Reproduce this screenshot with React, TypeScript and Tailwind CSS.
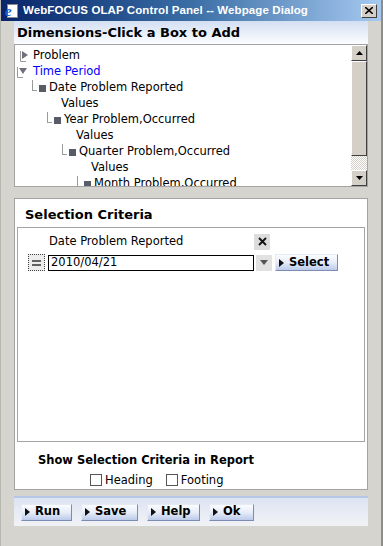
import React from 'react';

const font = { fontFamily: '"DejaVu Sans", Verdana, sans-serif' };

const Corner: React.FC = () => (
    <span className="relative inline-block w-[5px] h-[11px] mr-[2px] self-start">
        <span className="absolute left-0 top-0 w-px h-[11px] bg-[#9a9a9a]" />
        <span className="absolute left-0 bottom-0 w-[5px] h-px bg-[#9a9a9a]" />
    </span>
);

const TreeLeaf: React.FC<{ indent: number; label: string }> = ({ indent, label }) => (
    <div className="flex items-center h-[16px]" style={{ paddingLeft: indent }}>
        <Corner />
        <span className="w-[7px] h-[7px] bg-[#575c66] mr-[3px]" />
        <span>{label}</span>
    </div>
);

const Values: React.FC<{ indent: number }> = ({ indent }) => (
    <div className="flex items-center h-[16px]" style={{ paddingLeft: indent }}>
        Values
    </div>
);

const BlueButton: React.FC<{ label: string; w: string }> = ({ label, w }) => (
    <button
        className={`${w} h-[17px] flex items-center pl-[3px] border border-[#7c8cb2] border-t-[#e4eaf6] border-l-[#e4eaf6] bg-gradient-to-b from-[#fbfcff] via-[#e6ecf8] to-[#bccbea] text-[11.5px] font-bold text-black`}
        style={font}
    >
        <svg width="5" height="8" viewBox="0 0 5 8" className="mr-[5px]">
            <path d="M0 0 L5 4 L0 8 Z" fill="#111" />
        </svg>
        {label}
    </button>
);

export default function App() {
    return (
        <div className="w-[383px] h-[546px] bg-[#d6d4cf] border-l border-l-[#b8b6b0] border-r-2 border-r-[#8f8d89] flex flex-col overflow-hidden" style={font}>
            {/* Title bar */}
            <div className="h-[21px] flex items-center bg-gradient-to-r from-[#0a246a] via-[#3a6ea5] to-[#a6caf0] pl-[3px] pr-[3px]">
                <div className="relative w-[16px] h-[16px] mr-[3px]">
                    <div className="absolute left-[3px] top-[1px] w-[11px] h-[14px] bg-white border border-[#8a8a8a]" />
                    <span className="absolute left-[1px] top-[-3px] text-[15px] italic font-bold text-[#1a5fd0]" style={{ fontFamily: '"Liberation Serif", serif' }}>e</span>
                </div>
                <span className="text-white font-bold text-[11.5px] tracking-[0.1px]" style={{ fontFamily: '"Liberation Sans", Arial, sans-serif' }}>
                    WebFOCUS OLAP Control Panel -- Webpage Dialog
                </span>
                <div className="ml-auto w-[16px] h-[14px] bg-[#d4d0c8] border border-white border-r-[#404040] border-b-[#404040] flex items-center justify-center mr-[1px]">
                    <svg width="8" height="7" viewBox="0 0 8 7">
                        <path d="M0 0 L8 7 M8 0 L0 7" stroke="#000" strokeWidth="1.6" />
                    </svg>
                </div>
            </div>

            <div className="px-[13px] flex flex-col">
                {/* Dimensions header */}
                <div className="h-[23px] flex items-center pl-[3px] bg-gradient-to-b from-[#d3dff2] to-[#fcfdff] text-[13px] font-bold text-black">
                    Dimensions-Click a Box to Add
                </div>

                {/* Tree box */}
                <div className="h-[143px] bg-white border border-[#a4a4a4] flex overflow-hidden">
                    <div className="flex-1 pt-[3px] text-[11.5px] text-black overflow-hidden whitespace-nowrap">
                        <div className="flex items-center h-[16px] pl-[5px]">
                            <svg width="12" height="12" viewBox="0 0 12 12" className="mr-[1px]">
                                <path d="M0.5 1 V11.5 H6" stroke="#9a9a9a" fill="none" />
                                <path d="M2 1 L8 5 L2 9 Z" fill="#6e7178" />
                            </svg>
                            Problem
                        </div>
                        <div className="flex items-center h-[16px] pl-[2px] text-[#0000ff]">
                            <svg width="12" height="12" viewBox="0 0 12 12" className="mr-[4px]">
                                <path d="M0.5 1 V11.5 H6" stroke="#9a9a9a" fill="none" />
                                <path d="M2 2 L10 2 L6 8 Z" fill="#6e7178" />
                            </svg>
                            Time Period
                        </div>
                        <TreeLeaf indent={17} label="Date Problem Reported" />
                        <Values indent={46} />
                        <TreeLeaf indent={32} label="Year Problem,Occurred" />
                        <Values indent={61} />
                        <TreeLeaf indent={47} label="Quarter Problem,Occurred" />
                        <Values indent={76} />
                        <TreeLeaf indent={62} label="Month Problem,Occurred" />
                    </div>
                    {/* Scrollbar */}
                    <div className="w-[16px] flex flex-col">
                        <div className="h-[16px] bg-[#d4d0c8] border border-white border-r-[#404040] border-b-[#404040] flex items-center justify-center">
                            <svg width="7" height="4" viewBox="0 0 7 4"><path d="M0 4 L3.5 0 L7 4 Z" fill="#000" /></svg>
                        </div>
                        <div className="h-[95px] bg-[#d4d0c8] border border-white border-r-[#404040] border-b-[#404040]" />
                        <div className="flex-1 bg-[repeating-conic-gradient(#d4d0c8_0%_25%,#ffffff_0%_50%)] bg-[length:2px_2px]" />
                        <div className="h-[16px] bg-[#d4d0c8] border border-white border-r-[#404040] border-b-[#404040] flex items-center justify-center">
                            <svg width="7" height="4" viewBox="0 0 7 4"><path d="M0 0 L3.5 4 L7 0 Z" fill="#000" /></svg>
                        </div>
                    </div>
                </div>

                {/* Selection Criteria panel */}
                <div className="mt-[11px] h-[292px] bg-white border border-[#a4a4a4] flex flex-col">
                    <div className="h-[28px] flex items-center pt-[3px] pl-[10px] text-[13px] font-bold text-black">
                        Selection Criteria
                    </div>
                    <div className="mx-[2px] h-[217px] border border-[#a4a4a4] pt-[6px] flex flex-col gap-[4px] text-[11.5px] text-black">
                        <div className="flex items-center h-[16px]">
                            <div className="w-[236px] pl-[31px]">Date Problem Reported</div>
                            <div className="w-[16px] h-[16px] bg-[#dcdcdc] flex items-center justify-center">
                                <svg width="9" height="9" viewBox="0 0 9 9">
                                    <path d="M1 1 L8 8 M8 1 L1 8" stroke="#111" strokeWidth="1.8" />
                                </svg>
                            </div>
                        </div>
                        <div className="flex items-center h-[18px] pl-[10px]">
                            <div className="w-[17px] h-[17px] border border-dotted border-[#444] bg-[#ececec] flex items-center justify-center">
                                <svg width="9" height="6" viewBox="0 0 9 6">
                                    <path d="M0 1 H9 M0 5 H9" stroke="#333" strokeWidth="1.5" />
                                </svg>
                            </div>
                            <div className="ml-[3px] w-[206px] h-[16px] border border-black flex items-center pl-[2px]">
                                2010/04/21
                            </div>
                            <div className="ml-[2px] w-[16px] h-[16px] bg-[#e2e2e2] flex items-center justify-center">
                                <svg width="8" height="5" viewBox="0 0 8 5"><path d="M0 0 L4 5 L8 0 Z" fill="#555" /></svg>
                            </div>
                            <div className="ml-[3px]">
                                <BlueButton label="Select" w="w-[63px]" />
                            </div>
                        </div>
                    </div>
                    <div className="mt-[10px] pl-[23px] text-[11.5px] font-bold text-black">
                        Show Selection Criteria in Report
                    </div>
                    <div className="mt-[3px] flex items-center pl-[75px] text-[11.5px] text-black">
                        <span className="w-[12px] h-[12px] border border-[#555] bg-white mr-[3px]" />
                        <span>Heading</span>
                        <span className="ml-[13px] w-[12px] h-[12px] border border-[#555] bg-white mr-[3px]" />
                        <span>Footing</span>
                    </div>
                </div>

                {/* Bottom buttons bar */}
                <div className="mt-[6px] h-[30px] border-t-2 border-t-[#b6c6e6] bg-gradient-to-b from-[#dde4f2] to-[#f1f2f5] flex items-center pl-[7px] gap-[9px]">
                    <BlueButton label="Run" w="w-[51px]" />
                    <BlueButton label="Save" w="w-[57px]" />
                    <BlueButton label="Help" w="w-[53px]" />
                    <BlueButton label="Ok" w="w-[45px]" />
                </div>
            </div>
        </div>
    );
}
